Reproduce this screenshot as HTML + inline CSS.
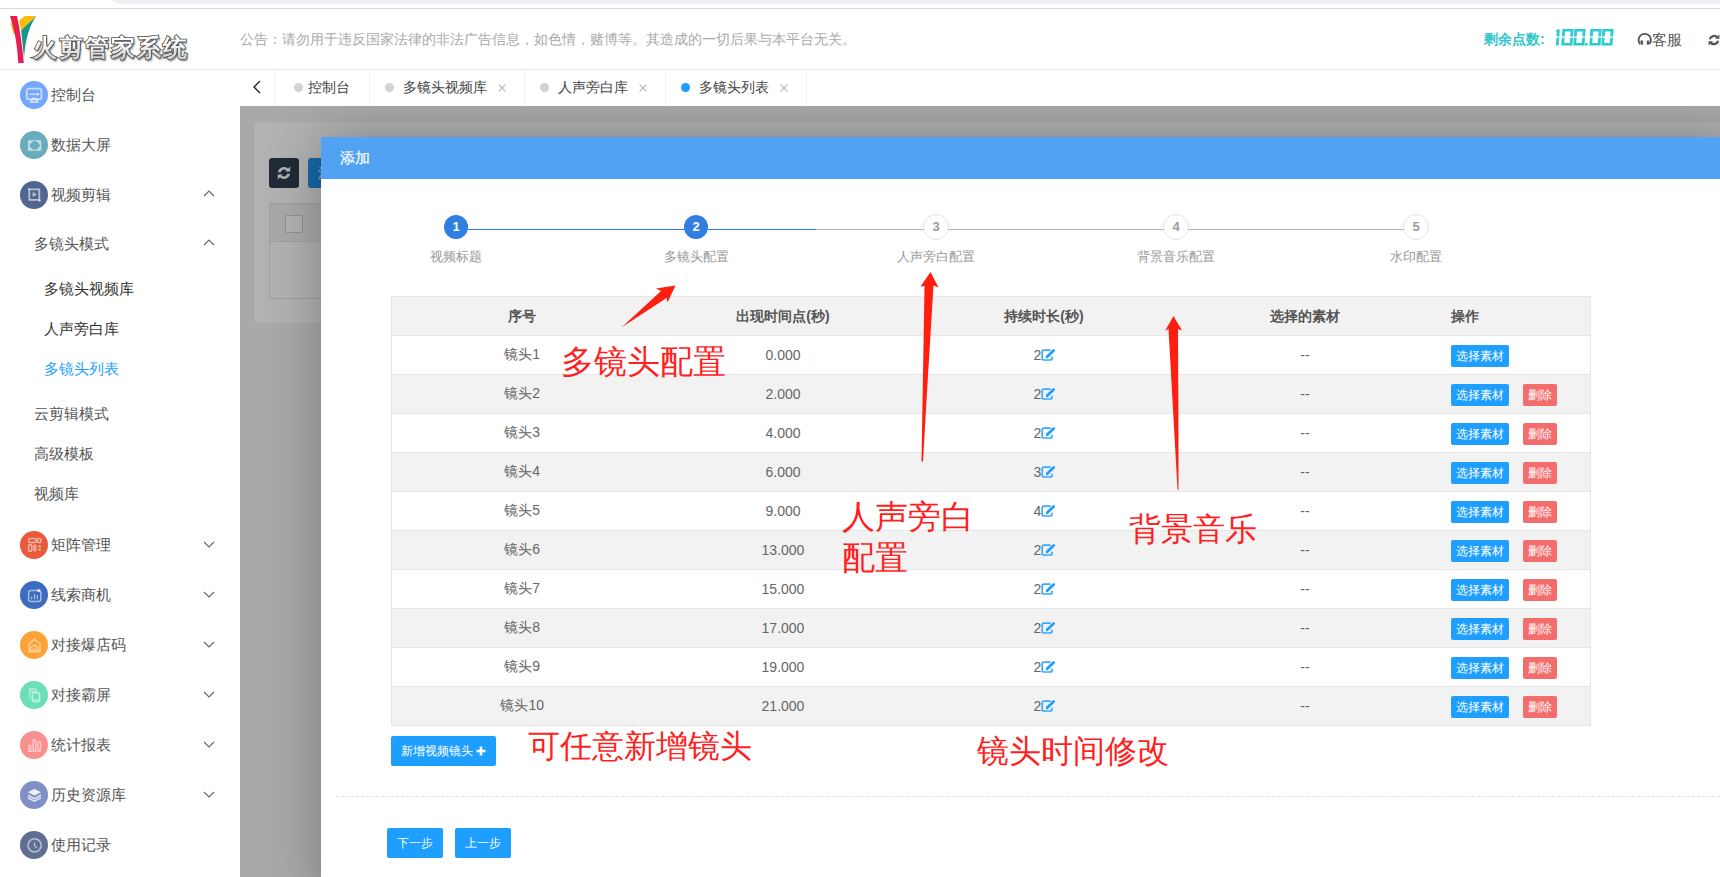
<!DOCTYPE html>
<html><head><meta charset="utf-8">
<style>
*{box-sizing:border-box;margin:0;padding:0}
html,body{width:1720px;height:877px;overflow:hidden;background:#fff;font-family:"Liberation Sans",sans-serif;color:#333;font-size:14px}
.a{position:absolute;white-space:nowrap}
#topstrip{position:absolute;left:0;top:0;width:1720px;height:9px;background:#fff;border-bottom:1px solid #d7d9dc;overflow:hidden}
#topstrip .pill{position:absolute;left:109px;top:-20px;width:1650px;height:24px;border-radius:12px;background:#eff1f4}
#header{position:absolute;left:0;top:9px;width:1720px;height:61px;background:#fff;border-bottom:1px solid #ececec}
.mi{position:absolute;height:20px;line-height:20px;font-size:15px;color:#555;white-space:nowrap}
.ic{position:absolute;left:20px;width:28px;height:28px;border-radius:50%}
.ic svg{position:absolute;left:0;top:0}
.chev{position:absolute;left:203px}
.tsep{position:absolute;top:70px;width:1px;height:36px;background:#f0f0f0}
.dot{position:absolute;top:83px;width:9px;height:9px;border-radius:50%;background:#d2d2d2}
.tab{position:absolute;top:77px;height:20px;line-height:20px;font-size:14px;color:#444;white-space:nowrap}
.tx{position:absolute;top:78px;color:#bbb;font-size:14px;line-height:20px}
#shade{position:absolute;left:240px;top:106px;width:1480px;height:771px;background:#f2f2f2;overflow:hidden}
#dlg{position:absolute;left:81px;top:31px;width:1420px;height:760px;background:#fff;box-shadow:1px 1px 50px rgba(0,0,0,.3)}
#dlgh{position:absolute;left:0;top:0;width:100%;height:42px;background:#52a2f3;color:#fff;font-size:15px;line-height:42px;padding-left:19px;-webkit-text-stroke:0.2px #fff}
.step{position:absolute;top:215px;width:24px;height:24px;border-radius:50%;font-size:13px;font-weight:bold;text-align:center;line-height:24px}
.sdone{background:#2f7ee0;color:#fff}
.stodo{background:#fff;border:1px solid #e2e2e2;color:#999;line-height:24px;width:26px;height:26px;margin-left:-1px;margin-top:-1px}
.slab{position:absolute;top:249px;font-size:12.5px;color:#999;text-align:center;width:160px;line-height:16px}
table.t{position:absolute;left:391px;top:296px;border-left:1px solid #e6e6e6;border-right:1px solid #e6e6e6;border-collapse:collapse;table-layout:fixed;width:1199px;font-size:14px;color:#666}
.t td,.t th{border:0;border-top:1px solid #e6e6e6;border-bottom:1px solid #e6e6e6;height:39px;text-align:center;padding:0;white-space:nowrap}
.t th{background:#f2f2f2;font-weight:bold;color:#555;height:39px;padding-top:2px}
.t tr:nth-child(odd) td{background:#f2f2f2}
.t td.op{text-align:left;padding-left:15px}
.btn{display:inline-block;height:22px;line-height:22px;color:#fff;font-size:12px;padding:0 5px;border-radius:2px;vertical-align:middle;position:relative;top:1px}
.b1{background:#1e9fff}
.b2{background:#f36d6d;margin-left:14px}
.logo{font-size:24px;line-height:28px;font-weight:bold;letter-spacing:2px}
.lb{color:#555;-webkit-text-stroke:1.6px #555;text-shadow:1px 2px 2px rgba(0,0,0,.5)}
.lt{color:#f6f6f6;background:linear-gradient(#ffffff 30%,#c8c8c8);-webkit-background-clip:text;background-clip:text;-webkit-text-fill-color:transparent}
.red{color:#ff1f1f;font-size:32.6px;position:absolute;white-space:nowrap;line-height:1}
.bb{position:absolute;background:#1e9fff;color:#fff;font-size:12px;text-align:center;border-radius:2px}
</style></head><body>
<div id="topstrip"><div class="pill"></div></div>
<div id="header"></div>
<svg class="a" style="left:0;top:0" width="40" height="70" viewBox="0 0 40 70">
<path d="M10.5,23.5 L13.5,22 L15.5,33 L13.8,34.5Z" fill="#fbbc0a"/>
<path d="M19,20.5 L24.8,16 L36.3,16 L21.4,31Z" fill="#fbbc0a"/>
<path d="M36.3,16 Q26,30 24,58 L21.2,30.5Z" fill="#13978a"/>
<path d="M10,16 L17,16 Q21.5,37 23.8,63 L18.3,63 Q17,37 10,16Z" fill="#e91d52"/>
</svg>
<div class="a logo lb" style="left:33px;top:34px">火剪管家系统</div><div class="a logo lt" style="left:33px;top:34px">火剪管家系统</div>
<div class="a" style="left:240px;top:31px;font-size:14px;line-height:16px;color:#aaa">公告：请勿用于违反国家法律的非法广告信息，如色情，赌博等。其造成的一切后果与本平台无关。</div>
<div class="a" style="left:1484px;top:31px;font-size:14px;line-height:16px;color:#2ec5cc;font-weight:bold">剩余点数:</div>
<svg class="a" style="left:1553px;top:28px" width="64" height="20" viewBox="0 0 64 20">
<g fill="#2ccbd0" transform="translate(0.3,0) skewX(-4)">
<path d="M3.8,1.4 h2.8 v7.2 h-2.8z M3.8,9.8 h2.8 v7.6 h-2.8z M2.8,3.6 l1,-2.2 v3z"/>
<g id="z"><path d="M9.2,1 h11.2 v7.6 h-2.8 v-5.2 h-5.6 v5.2 h-2.8z M9.2,9.8 h2.8 v5.3 h5.6 v-5.3 h2.8 v7.8 h-11.2z"/></g>
<use href="#z" x="12"/>
<path d="M33,15.1 h2.6 v2.5 h-2.6z"/>
<use href="#z" x="28"/>
<use href="#z" x="40"/>
</g></svg>
<svg class="a" style="left:1637px;top:32px" width="16" height="15" viewBox="0 0 16 15"><path d="M3.1,12.2 A6.2,6.2 0 1 1 12.4,12.2" fill="none" stroke="#555" stroke-width="1.9"/><path d="M3.4,8.4 L6,8.4 L6,12.8 L3.8,12.6Z M9.8,8.4 L12.4,8.4 L12,12.6 L9.8,12.8Z" fill="#555"/></svg>
<div class="a" style="left:1652px;top:31px;font-size:15px;line-height:18px;color:#555">客服</div>
<svg class="a" style="left:1707px;top:33px" width="14" height="14" viewBox="0 0 16 16"><path d="M3.2,7.2 A5,5 0 0 1 11.8,5 M12.8,8.8 A5,5 0 0 1 4.2,11" fill="none" stroke="#555" stroke-width="2.6"/><path d="M9.2,6.6 L14.2,6.6 L14.2,1.6Z M6.8,9.4 L1.8,9.4 L1.8,14.4Z" fill="#555"/></svg>

<div class="ic" style="top:81px;background:#76a6fb"><svg width="28" height="28" viewBox="0 0 28 28"><rect x="6.8" y="7.6" width="14.6" height="10.6" rx="2" fill="none" stroke="#fff" stroke-opacity=".6" stroke-width="1.9"/><path d="M9.5,13.2 H17.5" stroke="#fff" stroke-opacity=".6" stroke-width="1.6"/><path d="M17.2,11.5 L19.5,13.2 L17.2,14.9Z" fill="#fff" fill-opacity=".75"/><path d="M11,21.2 Q12,17.6 14.3,17.2 Q16.6,17.6 17.6,21.2Z" fill="none" stroke="#fff" stroke-opacity=".6" stroke-width="1.8"/></svg></div>
<div class="mi" style="left:51px;top:85px">控制台</div>
<div class="ic" style="top:131px;background:#67adbd"><svg width="28" height="28" viewBox="0 0 28 28"><path d="M8,9.2 H21.3 V19.8 H8Z M9.3,14.4 Q14.7,5.8 20.1,14.4 Q14.7,23 9.3,14.4Z" fill="#fff" fill-opacity=".6" fill-rule="evenodd"/></svg></div>
<div class="mi" style="left:51px;top:135px">数据大屏</div>
<div class="ic" style="top:181px;background:#4f6690"><svg width="28" height="28" viewBox="0 0 28 28"><path d="M8.8,8.3 H19.3 V18.8 H9.3 V8.3" fill="none" stroke="#fff" stroke-opacity=".6" stroke-width="1.8"/><path d="M8,8.2 h1.5 M19,19 l1.4,1.2" stroke="#fff" stroke-opacity=".7" stroke-width="1.8"/><path d="M12.6,11 L17,13.5 L12.6,16Z" fill="#fff" fill-opacity=".6"/></svg></div>
<div class="mi" style="left:51px;top:185px">视频剪辑</div>
<svg class="chev" style="top:189px" width="12" height="8" viewBox="0 0 12 8"><path d="M1 7 L6 2 L11 7" fill="none" stroke="#666" stroke-width="1.2"/></svg>
<div class="mi" style="left:34px;top:234px">多镜头模式</div>
<svg class="chev" style="top:238px" width="12" height="8" viewBox="0 0 12 8"><path d="M1 7 L6 2 L11 7" fill="none" stroke="#666" stroke-width="1.2"/></svg>
<div class="mi" style="left:44px;top:279px;color:#333">多镜头视频库</div>
<div class="mi" style="left:44px;top:319px;color:#333">人声旁白库</div>
<div class="mi" style="left:44px;top:359px;color:#1e9fff">多镜头列表</div>
<div class="mi" style="left:34px;top:404px">云剪辑模式</div>
<div class="mi" style="left:34px;top:444px">高级模板</div>
<div class="mi" style="left:34px;top:484px">视频库</div>
<div class="ic" style="top:531px;background:#e85a3a"><svg width="28" height="28" viewBox="0 0 28 28"><rect x="8.6" y="7.6" width="7.4" height="4" rx="1.3" fill="none" stroke="#fff" stroke-opacity=".55" stroke-width="1.5"/><rect x="17.6" y="7.6" width="3.4" height="4" rx="1.2" fill="none" stroke="#fff" stroke-opacity=".55" stroke-width="1.5"/><rect x="8.6" y="13.6" width="3.2" height="6.6" rx="1.2" fill="none" stroke="#fff" stroke-opacity=".55" stroke-width="1.5"/><rect x="13.1" y="13.4" width="3.4" height="7" rx="1" fill="#fff" fill-opacity=".45"/><path d="M18.4,14.4 h2.4 v2 h-2.4z M18.4,17.8 h2.4 v2 h-2.4z" fill="#fff" fill-opacity=".55"/></svg></div>
<div class="mi" style="left:51px;top:535px">矩阵管理</div>
<svg class="chev" style="top:541px" width="12" height="8" viewBox="0 0 12 8"><path d="M1 1 L6 6 L11 1" fill="none" stroke="#666" stroke-width="1.2"/></svg>
<div class="ic" style="top:581px;background:#3d6bc0"><svg width="28" height="28" viewBox="0 0 28 28"><rect x="8.6" y="9.6" width="12.2" height="10.8" rx="2.4" fill="none" stroke="#fff" stroke-opacity=".55" stroke-width="1.5"/><path d="M11.6,18.3 v-2.6 M14.5,18.3 v-5.6 M17.3,18.3 v-4.3" stroke="#fff" stroke-opacity=".55" stroke-width="1.3"/><circle cx="18.8" cy="9.6" r="1.6" fill="#fff" fill-opacity=".75"/></svg></div>
<div class="mi" style="left:51px;top:585px">线索商机</div>
<svg class="chev" style="top:591px" width="12" height="8" viewBox="0 0 12 8"><path d="M1 1 L6 6 L11 1" fill="none" stroke="#666" stroke-width="1.2"/></svg>
<div class="ic" style="top:631px;background:#fda335"><svg width="28" height="28" viewBox="0 0 28 28"><path d="M9.2,20.8 V12.8 L14.4,8.4 L20,12.8 V20.8Z" fill="none" stroke="#fff" stroke-opacity=".45" stroke-width="1.6"/><path d="M11,16.5 Q14.4,12.3 17.8,16.5" fill="none" stroke="#fff" stroke-opacity=".5" stroke-width="1.8"/><rect x="9.5" y="17.5" width="10.2" height="3" fill="#fff" fill-opacity=".35"/></svg></div>
<div class="mi" style="left:51px;top:635px">对接爆店码</div>
<svg class="chev" style="top:641px" width="12" height="8" viewBox="0 0 12 8"><path d="M1 1 L6 6 L11 1" fill="none" stroke="#666" stroke-width="1.2"/></svg>
<div class="ic" style="top:681px;background:#6ddfb8"><svg width="28" height="28" viewBox="0 0 28 28"><path d="M9.6,16.4 V9 Q9.6,7.6 11,7.6 H14.6 Q16,7.6 16,9 V11.4" fill="none" stroke="#fff" stroke-opacity=".5" stroke-width="1.4"/><rect x="12.4" y="11.8" width="7.2" height="8.8" rx="1.4" fill="none" stroke="#fff" stroke-opacity=".55" stroke-width="1.5"/><path d="M10,10.2 H15.5 M13,18.8 H19" stroke="#fff" stroke-opacity=".5" stroke-width="1.2"/></svg></div>
<div class="mi" style="left:51px;top:685px">对接霸屏</div>
<svg class="chev" style="top:691px" width="12" height="8" viewBox="0 0 12 8"><path d="M1 1 L6 6 L11 1" fill="none" stroke="#666" stroke-width="1.2"/></svg>
<div class="ic" style="top:731px;background:#f99090"><svg width="28" height="28" viewBox="0 0 28 28"><rect x="8.6" y="14.2" width="2.2" height="4.8" rx="1.1" fill="none" stroke="#fff" stroke-opacity=".5" stroke-width="1.4"/><rect x="13.1" y="8.4" width="2.6" height="10.6" rx="1.3" fill="none" stroke="#fff" stroke-opacity=".5" stroke-width="1.4"/><rect x="18" y="10.6" width="2.6" height="8.4" rx="1.3" fill="none" stroke="#fff" stroke-opacity=".5" stroke-width="1.4"/><path d="M8,20.3 H21" stroke="#fff" stroke-opacity=".5" stroke-width="1.4"/></svg></div>
<div class="mi" style="left:51px;top:735px">统计报表</div>
<svg class="chev" style="top:741px" width="12" height="8" viewBox="0 0 12 8"><path d="M1 1 L6 6 L11 1" fill="none" stroke="#666" stroke-width="1.2"/></svg>
<div class="ic" style="top:781px;background:#7f91c4"><svg width="28" height="28" viewBox="0 0 28 28"><path d="M14.4,7.8 L21,11.2 L14.4,14.6 L8,11.2Z" fill="#fff" fill-opacity=".85"/><path d="M8,14.2 L14.4,17.6 L21,14.2 M8,16.8 L14.4,20.2 L21,16.8" fill="none" stroke="#fff" stroke-opacity=".75" stroke-width="1.6"/></svg></div>
<div class="mi" style="left:51px;top:785px">历史资源库</div>
<svg class="chev" style="top:791px" width="12" height="8" viewBox="0 0 12 8"><path d="M1 1 L6 6 L11 1" fill="none" stroke="#666" stroke-width="1.2"/></svg>
<div class="ic" style="top:831px;background:#5f6f92"><svg width="28" height="28" viewBox="0 0 28 28"><circle cx="14.6" cy="14.3" r="6.6" fill="none" stroke="#fff" stroke-opacity=".55" stroke-width="1.6"/><path d="M14.6,11.4 V14.8 L16.8,17" fill="none" stroke="#fff" stroke-opacity=".55" stroke-width="1.4"/></svg></div>
<div class="mi" style="left:51px;top:835px">使用记录</div>
<svg class="a" style="left:252px;top:80px" width="10" height="14" viewBox="0 0 10 14"><path d="M8 1 L2 7 L8 13" fill="none" stroke="#1a1a1a" stroke-width="1.3"/></svg>
<div class="tsep" style="left:274px"></div>
<div class="tsep" style="left:369px"></div>
<div class="tsep" style="left:524px"></div>
<div class="tsep" style="left:665px"></div>
<div class="tsep" style="left:806px"></div>
<div class="dot" style="left:294px;"></div>
<div class="tab" style="left:308px">控制台</div>
<div class="dot" style="left:385px;"></div>
<div class="tab" style="left:403px">多镜头视频库</div>
<svg class="a" style="left:498px;top:84px" width="8" height="8" viewBox="0 0 8 8"><path d="M0.6,0.6 L7.4,7.4 M7.4,0.6 L0.6,7.4" stroke="#b4b4b4" stroke-width="1.1"/></svg>
<div class="dot" style="left:540px;"></div>
<div class="tab" style="left:558px">人声旁白库</div>
<svg class="a" style="left:639px;top:84px" width="8" height="8" viewBox="0 0 8 8"><path d="M0.6,0.6 L7.4,7.4 M7.4,0.6 L0.6,7.4" stroke="#b4b4b4" stroke-width="1.1"/></svg>
<div class="dot" style="left:681px;background:#1e9fff"></div>
<div class="tab" style="left:699px">多镜头列表</div>
<svg class="a" style="left:780px;top:84px" width="8" height="8" viewBox="0 0 8 8"><path d="M0.6,0.6 L7.4,7.4 M7.4,0.6 L0.6,7.4" stroke="#b4b4b4" stroke-width="1.1"/></svg>
<div id="shade"><div class="a" style="left:14px;top:16px;width:1500px;height:201px;background:#fff;border-radius:3px"></div>
<div class="a" style="left:29px;top:52px;width:30px;height:30px;background:#2f3e4f;border-radius:3px"></div>
<svg class="a" style="left:36px;top:59px" width="16" height="16" viewBox="0 0 16 16"><path d="M3.2,7.2 A5,5 0 0 1 11.8,5 M12.8,8.8 A5,5 0 0 1 4.2,11" fill="none" stroke="#fff" stroke-width="2.6"/><path d="M9.2,6.6 L14.2,6.6 L14.2,1.6Z M6.8,9.4 L1.8,9.4 L1.8,14.4Z" fill="#fff"/></svg>
<div class="a" style="left:68px;top:52px;width:60px;height:30px;background:#2196f3;border-radius:3px;color:#fff;font-size:14px;line-height:30px;padding-left:10px">添加</div>
<div class="a" style="left:29px;top:97px;width:1480px;height:96px;border:1px solid #e6e6e6"></div>
<div class="a" style="left:30px;top:98px;width:1478px;height:38px;background:#f2f2f2;border-bottom:1px solid #e6e6e6"></div>
<div class="a" style="left:45px;top:109px;width:18px;height:18px;border:1px solid #d2d2d2;background:#fff;border-radius:2px"></div>
<div class="a" style="left:0;top:0;width:1480px;height:771px;background:rgba(0,0,0,.3)"></div>
<div id="dlg"><div id="dlgh">添加</div></div>
</div>
<div class="a" style="left:456px;top:229px;width:360px;height:1px;background:#2c7be0"></div>
<div class="a" style="left:816px;top:229px;width:600px;height:1px;background:#b2b2b2"></div>
<div class="step sdone" style="left:444px">1</div>
<div class="slab" style="left:376px">视频标题</div>
<div class="step sdone" style="left:684px">2</div>
<div class="slab" style="left:616px">多镜头配置</div>
<div class="step stodo" style="left:924px">3</div>
<div class="slab" style="left:856px">人声旁白配置</div>
<div class="step stodo" style="left:1164px">4</div>
<div class="slab" style="left:1096px">背景音乐配置</div>
<div class="step stodo" style="left:1404px">5</div>
<div class="slab" style="left:1336px">水印配置</div>
<table class="t"><colgroup><col style="width:261px"><col style="width:261px"><col style="width:261px"><col style="width:261px"><col style="width:155px"></colgroup>
<tr><th>序号</th><th>出现时间点(秒)</th><th>持续时长(秒)</th><th>选择的素材</th><th class="op" style="text-align:left;padding-left:15px">操作</th></tr>
<tr><td>镜头1</td><td>0.000</td><td>2<svg width="15" height="12" viewBox="0 0 15 12" style="vertical-align:-1px;margin-right:-2px"><path d="M9.6,1.2 H3 Q1.2,1.2 1.2,3 V9.2 Q1.2,11 3,11 H9.2 Q11,11 11,9.2 V7.8" fill="none" stroke="#3aa9ff" stroke-width="1.7"/><path d="M6.4,7.4 L12.6,1.6" stroke="#1e9fff" stroke-width="2.8" stroke-linecap="round"/><path d="M4.9,9.3 L5.3,6.9 L7.3,8.9Z" fill="#1e9fff"/></svg></td><td>--</td><td class="op"><span class="btn b1">选择素材</span></td></tr>
<tr><td>镜头2</td><td>2.000</td><td>2<svg width="15" height="12" viewBox="0 0 15 12" style="vertical-align:-1px;margin-right:-2px"><path d="M9.6,1.2 H3 Q1.2,1.2 1.2,3 V9.2 Q1.2,11 3,11 H9.2 Q11,11 11,9.2 V7.8" fill="none" stroke="#3aa9ff" stroke-width="1.7"/><path d="M6.4,7.4 L12.6,1.6" stroke="#1e9fff" stroke-width="2.8" stroke-linecap="round"/><path d="M4.9,9.3 L5.3,6.9 L7.3,8.9Z" fill="#1e9fff"/></svg></td><td>--</td><td class="op"><span class="btn b1">选择素材</span><span class="btn b2">删除</span></td></tr>
<tr><td>镜头3</td><td>4.000</td><td>2<svg width="15" height="12" viewBox="0 0 15 12" style="vertical-align:-1px;margin-right:-2px"><path d="M9.6,1.2 H3 Q1.2,1.2 1.2,3 V9.2 Q1.2,11 3,11 H9.2 Q11,11 11,9.2 V7.8" fill="none" stroke="#3aa9ff" stroke-width="1.7"/><path d="M6.4,7.4 L12.6,1.6" stroke="#1e9fff" stroke-width="2.8" stroke-linecap="round"/><path d="M4.9,9.3 L5.3,6.9 L7.3,8.9Z" fill="#1e9fff"/></svg></td><td>--</td><td class="op"><span class="btn b1">选择素材</span><span class="btn b2">删除</span></td></tr>
<tr><td>镜头4</td><td>6.000</td><td>3<svg width="15" height="12" viewBox="0 0 15 12" style="vertical-align:-1px;margin-right:-2px"><path d="M9.6,1.2 H3 Q1.2,1.2 1.2,3 V9.2 Q1.2,11 3,11 H9.2 Q11,11 11,9.2 V7.8" fill="none" stroke="#3aa9ff" stroke-width="1.7"/><path d="M6.4,7.4 L12.6,1.6" stroke="#1e9fff" stroke-width="2.8" stroke-linecap="round"/><path d="M4.9,9.3 L5.3,6.9 L7.3,8.9Z" fill="#1e9fff"/></svg></td><td>--</td><td class="op"><span class="btn b1">选择素材</span><span class="btn b2">删除</span></td></tr>
<tr><td>镜头5</td><td>9.000</td><td>4<svg width="15" height="12" viewBox="0 0 15 12" style="vertical-align:-1px;margin-right:-2px"><path d="M9.6,1.2 H3 Q1.2,1.2 1.2,3 V9.2 Q1.2,11 3,11 H9.2 Q11,11 11,9.2 V7.8" fill="none" stroke="#3aa9ff" stroke-width="1.7"/><path d="M6.4,7.4 L12.6,1.6" stroke="#1e9fff" stroke-width="2.8" stroke-linecap="round"/><path d="M4.9,9.3 L5.3,6.9 L7.3,8.9Z" fill="#1e9fff"/></svg></td><td>--</td><td class="op"><span class="btn b1">选择素材</span><span class="btn b2">删除</span></td></tr>
<tr><td>镜头6</td><td>13.000</td><td>2<svg width="15" height="12" viewBox="0 0 15 12" style="vertical-align:-1px;margin-right:-2px"><path d="M9.6,1.2 H3 Q1.2,1.2 1.2,3 V9.2 Q1.2,11 3,11 H9.2 Q11,11 11,9.2 V7.8" fill="none" stroke="#3aa9ff" stroke-width="1.7"/><path d="M6.4,7.4 L12.6,1.6" stroke="#1e9fff" stroke-width="2.8" stroke-linecap="round"/><path d="M4.9,9.3 L5.3,6.9 L7.3,8.9Z" fill="#1e9fff"/></svg></td><td>--</td><td class="op"><span class="btn b1">选择素材</span><span class="btn b2">删除</span></td></tr>
<tr><td>镜头7</td><td>15.000</td><td>2<svg width="15" height="12" viewBox="0 0 15 12" style="vertical-align:-1px;margin-right:-2px"><path d="M9.6,1.2 H3 Q1.2,1.2 1.2,3 V9.2 Q1.2,11 3,11 H9.2 Q11,11 11,9.2 V7.8" fill="none" stroke="#3aa9ff" stroke-width="1.7"/><path d="M6.4,7.4 L12.6,1.6" stroke="#1e9fff" stroke-width="2.8" stroke-linecap="round"/><path d="M4.9,9.3 L5.3,6.9 L7.3,8.9Z" fill="#1e9fff"/></svg></td><td>--</td><td class="op"><span class="btn b1">选择素材</span><span class="btn b2">删除</span></td></tr>
<tr><td>镜头8</td><td>17.000</td><td>2<svg width="15" height="12" viewBox="0 0 15 12" style="vertical-align:-1px;margin-right:-2px"><path d="M9.6,1.2 H3 Q1.2,1.2 1.2,3 V9.2 Q1.2,11 3,11 H9.2 Q11,11 11,9.2 V7.8" fill="none" stroke="#3aa9ff" stroke-width="1.7"/><path d="M6.4,7.4 L12.6,1.6" stroke="#1e9fff" stroke-width="2.8" stroke-linecap="round"/><path d="M4.9,9.3 L5.3,6.9 L7.3,8.9Z" fill="#1e9fff"/></svg></td><td>--</td><td class="op"><span class="btn b1">选择素材</span><span class="btn b2">删除</span></td></tr>
<tr><td>镜头9</td><td>19.000</td><td>2<svg width="15" height="12" viewBox="0 0 15 12" style="vertical-align:-1px;margin-right:-2px"><path d="M9.6,1.2 H3 Q1.2,1.2 1.2,3 V9.2 Q1.2,11 3,11 H9.2 Q11,11 11,9.2 V7.8" fill="none" stroke="#3aa9ff" stroke-width="1.7"/><path d="M6.4,7.4 L12.6,1.6" stroke="#1e9fff" stroke-width="2.8" stroke-linecap="round"/><path d="M4.9,9.3 L5.3,6.9 L7.3,8.9Z" fill="#1e9fff"/></svg></td><td>--</td><td class="op"><span class="btn b1">选择素材</span><span class="btn b2">删除</span></td></tr>
<tr><td>镜头10</td><td>21.000</td><td>2<svg width="15" height="12" viewBox="0 0 15 12" style="vertical-align:-1px;margin-right:-2px"><path d="M9.6,1.2 H3 Q1.2,1.2 1.2,3 V9.2 Q1.2,11 3,11 H9.2 Q11,11 11,9.2 V7.8" fill="none" stroke="#3aa9ff" stroke-width="1.7"/><path d="M6.4,7.4 L12.6,1.6" stroke="#1e9fff" stroke-width="2.8" stroke-linecap="round"/><path d="M4.9,9.3 L5.3,6.9 L7.3,8.9Z" fill="#1e9fff"/></svg></td><td>--</td><td class="op"><span class="btn b1">选择素材</span><span class="btn b2">删除</span></td></tr>
</table>
<div class="bb" style="left:391px;top:736px;width:105px;height:30px;line-height:30px">新增视频镜头 <svg width="10" height="10" viewBox="0 0 10 10" style="vertical-align:-1px"><path d="M5,0.5V9.5M0.5,5H9.5" stroke="#fff" stroke-width="2.6"/></svg></div>
<div class="a" style="left:336px;top:796px;width:1384px;height:0;border-top:1px dashed #e2e2e2"></div>
<div class="bb" style="left:387px;top:828px;width:56px;height:30px;line-height:30px">下一步</div>
<div class="bb" style="left:455px;top:828px;width:56px;height:30px;line-height:30px">上一步</div>
<div class="red" style="left:561px;top:346px;font-size:32.5px">多镜头配置</div>
<div class="red" style="left:842px;top:496px;line-height:41px">人声旁白<br>配置</div>
<div class="red" style="left:1129px;top:513px;font-size:32.2px">背景音乐</div>
<div class="red" style="left:977px;top:735px;font-size:32.3px">镜头时间修改</div>
<div class="red" style="left:528px;top:730px;font-size:32.3px">可任意新增镜头</div>
<svg class="a" style="left:0;top:0" width="1720" height="877">
<polygon fill="#ff1f10" points="621.5,327.5 661,291 656,288.5 675.5,285.5 667.5,302.5 666.5,298"/>
<polygon fill="#ff1f10" points="930.5,272 938.5,287.5 933.5,285.5 926.5,400 923,462 921.5,461 924.5,286 920.5,286.5"/>
<polygon fill="#ff1f10" points="1173.5,316 1182,330.5 1178,329 1178.5,440 1178.5,490 1177.5,489.5 1168.5,329 1165,331"/>
</svg>
</body></html>
